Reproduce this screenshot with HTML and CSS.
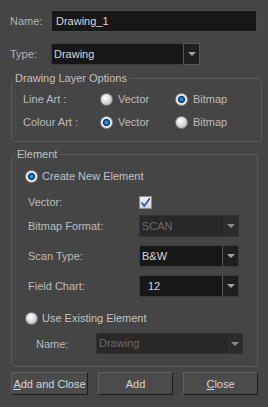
FILE: index.html
```html
<!doctype html>
<html>
<head>
	<title>Add Drawing Layer</title>
	<meta charset="utf-8" />
	<link rel="stylesheet" href="styles.css">
</head>
<body>
	<div class="dialog">
		<div class="row top-row">
			<span class="top-label">Name:</span>
			<div class="field name-field">Drawing_1</div>
		</div>
		<div class="row top-row type-row">
			<span class="top-label">Type:</span>
			<div class="combo type-combo">
				<span class="combo-text">Drawing</span>
				<span class="combo-arrow"></span>
			</div>
		</div>

		<fieldset class="group layer-group">
			<legend>Drawing Layer Options</legend>
			<div class="opt-row">
				<span class="opt-label">Line Art :</span>
				<span class="option"><span class="radio"></span>Vector</span>
				<span class="option"><span class="radio on"></span>Bitmap</span>
			</div>
			<div class="opt-row">
				<span class="opt-label">Colour Art :</span>
				<span class="option"><span class="radio on"></span>Vector</span>
				<span class="option"><span class="radio"></span>Bitmap</span>
			</div>
		</fieldset>

		<fieldset class="group element-group">
			<legend>Element</legend>
			<div class="radio-row create-row"><span class="radio on"></span>Create New Element</div>
			<div class="row elem-row vector-row">
				<span class="elem-label">Vector:</span>
				<span class="check">
					<svg width="11" height="11" viewBox="0 0 11 11"><path d="M1.5 5.5 L4.3 9 L9.8 1.2" fill="none" stroke="#2b45b8" stroke-width="1.6"/></svg>
				</span>
			</div>
			<div class="row elem-row">
				<span class="elem-label">Bitmap Format:</span>
				<div class="combo elem-combo disabled">
					<span class="combo-text">SCAN</span>
					<span class="combo-arrow"></span>
				</div>
			</div>
			<div class="row elem-row spaced">
				<span class="elem-label">Scan Type:</span>
				<div class="combo elem-combo">
					<span class="combo-text">B&amp;W</span>
					<span class="combo-arrow"></span>
				</div>
			</div>
			<div class="row elem-row spaced">
				<span class="elem-label">Field Chart:</span>
				<div class="combo elem-combo">
					<span class="combo-text field-text">12</span>
					<span class="combo-arrow"></span>
				</div>
			</div>
			<div class="radio-row existing-row"><span class="radio"></span>Use Existing Element</div>
			<div class="row elem-row name-row">
				<span class="elem-label short">Name:</span>
				<div class="combo existing-combo disabled">
					<span class="combo-text">Drawing</span>
					<span class="combo-arrow"></span>
				</div>
			</div>
		</fieldset>

		<div class="buttons">
			<div class="btn wide"><span><u>A</u>dd and Close</span></div>
			<div class="btn">Add</div>
			<div class="btn"><span><u>C</u>lose</span></div>
		</div>
	</div>
</body>
</html>
```

FILE: styles.css
```css
html, body {
	margin: 0;
	background-color: #454545;
}

body {
	font-family: "Liberation Sans", Arial, sans-serif;
	font-size: 11px;
	color: #bcbcbc;
}

.dialog {
	width: 268px;
	height: 407px;
	box-sizing: border-box;
	padding: 10px 10px 0 11px;
}

.row {
	display: flex;
	align-items: center;
}

.top-row {
	height: 22px;
}

.top-label {
	width: 41px;
	margin-left: -1px;
	color: #b4b4b4;
}

.type-row {
	margin-top: 11px;
}

.field {
	box-sizing: border-box;
	height: 22px;
	line-height: 20px;
	background-color: #171717;
	border: 1px solid #4a4a4a;
	color: #dadada;
	padding-left: 4px;
}

.name-field {
	width: 206px;
}

/* combo boxes */
.combo {
	box-sizing: border-box;
	display: flex;
	height: 22px;
	background-color: #171717;
	border: 1px solid #3a3a3a;
}

.combo-text {
	flex: 1;
	line-height: 20px;
	padding-left: 2px;
	color: #d8d8d8;
}

.combo-arrow {
	width: 15px;
	background-color: #1f1f1f;
	border-left: 1px solid #5a5a5a;
	display: flex;
	align-items: center;
	justify-content: center;
}

.combo-arrow::before {
	content: "";
	border-left: 4px solid transparent;
	border-right: 4px solid transparent;
	border-top: 4px solid #a4a4a4;
}

.type-combo {
	width: 149px;
}

.type-combo .combo-arrow {
	border: 1px solid #575757;
	margin: -1px -1px -1px 0;
}

.combo.disabled {
	background-color: #292929;
	border-color: #333;
}

.combo.disabled .combo-text {
	color: #6c6c6c;
}

.combo.disabled .combo-arrow {
	background-color: #2c2c2c;
	border-left-color: #232323;
}

.combo.disabled .combo-arrow::before {
	border-top-color: #8a8a8a;
}

/* groups */
.group {
	margin: 6px 0 0;
	padding: 4px 11px 9px;
	width: 247px;
	box-sizing: border-box;
	border: 1px solid #5a5a5a;
	border-radius: 4px;
}

.group legend {
	margin-left: -10px;
	padding: 0 3px 0 2px;
	line-height: 14px;
	color: #c2c2c2;
}

.opt-row {
	display: flex;
	align-items: center;
	height: 20px;
	margin-top: 3px;
}

.opt-row:first-of-type {
	margin-top: 0;
}

.opt-label {
	width: 77px;
}

.option {
	width: 75px;
	display: flex;
	align-items: center;
}

.radio {
	width: 13px;
	height: 13px;
	box-sizing: border-box;
	border-radius: 50%;
	border: 1px solid #7c7c7c;
	background: radial-gradient(circle at 40% 35%, #ffffff 0, #dcdcdc 45%, #a0a0a0 100%);
	margin-right: 5px;
	flex: none;
}

.radio.on {
	border-color: #8a8a8a;
	background: radial-gradient(circle, #45b0ff 0, #1b73c6 1.5px, #0e3c6c 3.2px, #f4f4f4 4.2px, #d6d6d6 100%);
}

.element-group {
	margin-top: 5px;
	padding: 5px 0 12px 13px;
}

.radio-row {
	display: flex;
	align-items: center;
	height: 20px;
	color: #c4c4c4;
}

.radio-row .radio {
	margin-right: 4px;
}

.elem-row {
	padding-left: 3px;
}

.elem-label {
	width: 111px;
}

.elem-label.short {
	width: 60px;
}

.vector-row {
	height: 20px;
	margin-top: 6px;
	margin-bottom: 3px;
}

.check {
	width: 13px;
	height: 13px;
	box-sizing: border-box;
	border: 1px solid #8c8c8c;
	background: linear-gradient(#f4f4f4, #d2d2d2);
	display: flex;
	align-items: center;
	justify-content: center;
}

.elem-combo {
	width: 100px;
}

.spaced {
	margin-top: 8px;
}

.field-text {
	padding-left: 8px;
}

.existing-row {
	margin-top: 11px;
}

.name-row {
	margin-top: 5px;
	padding-left: 11px;
}

.existing-combo {
	width: 147px;
	height: 21px;
}

.existing-combo .combo-text {
	line-height: 19px;
}

/* buttons */
.buttons {
	display: flex;
	gap: 10px;
	margin-top: 5px;
}

.btn {
	box-sizing: border-box;
	width: 75px;
	height: 23px;
	display: flex;
	align-items: center;
	justify-content: center;
	background-color: #4b4b4b;
	border: 1px solid;
	border-color: #5f5f5f #1c1c1c #1c1c1c #5f5f5f;
	color: #d6d6d6;
	white-space: nowrap;
}

.btn.wide {
	width: 77px;
}
```
